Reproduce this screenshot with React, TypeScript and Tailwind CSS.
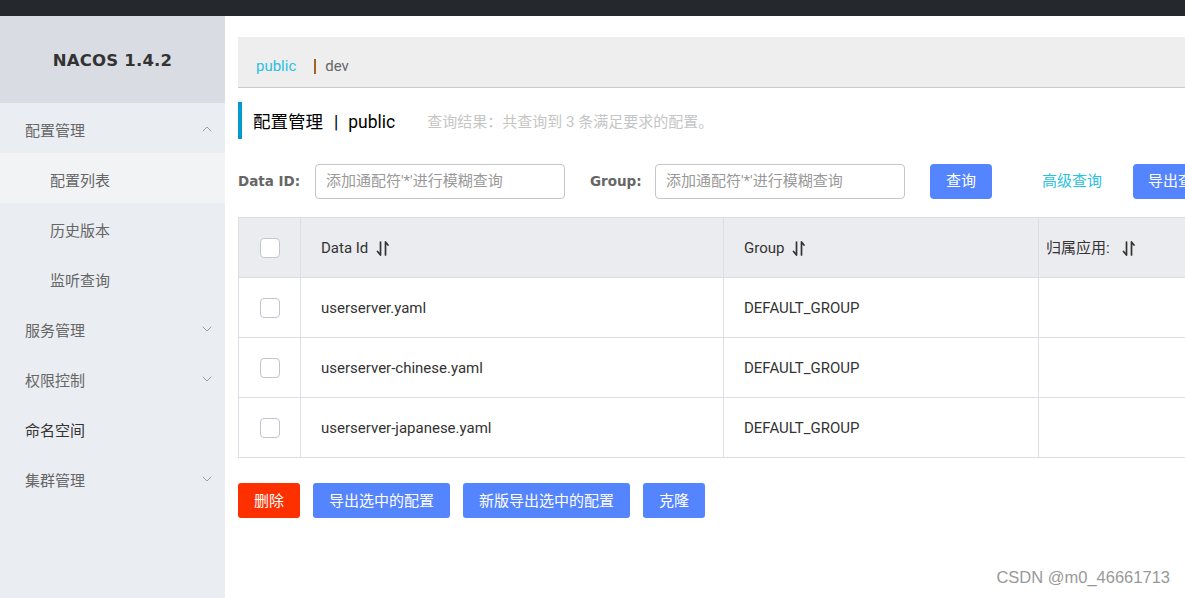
import { ChevronDown, ChevronUp } from "lucide-react";

const FONT = { fontFamily: 'Roboto, "Noto Sans CJK SC", sans-serif' };
const BOLD = { fontFamily: '"DejaVu Sans", sans-serif', fontSize: 13.5 };

function SortIcon({ gap = "ml-2" }: { gap?: string }) {
  return (
    <svg width="14" height="17" viewBox="0 0 14 17" fill="none" aria-hidden className={`${gap} inline-block`}>
      <path d="M4.5 2v13M4.5 15L1.5 11.5" stroke="#333" strokeWidth="1.7" strokeLinecap="round" />
      <path d="M9.5 15V2M9.5 2l2.5 3" stroke="#333" strokeWidth="1.7" strokeLinecap="round" />
    </svg>
  );
}

const menu = [
  { label: "配置管理", open: true, children: ["配置列表", "历史版本", "监听查询"] },
  { label: "服务管理", arrow: true },
  { label: "权限控制", arrow: true },
  { label: "命名空间", dark: true },
  { label: "集群管理", arrow: true },
];

const rows = [
  { id: "userserver.yaml", group: "DEFAULT_GROUP" },
  { id: "userserver-chinese.yaml", group: "DEFAULT_GROUP" },
  { id: "userserver-japanese.yaml", group: "DEFAULT_GROUP" },
];

function Checkbox() {
  return <span className="block w-[20px] h-[20px] rounded-[4px] border border-[#c4c6cf] bg-white" />;
}

export default function App() {
  return (
    <div className="w-[1185px] h-[598px] overflow-hidden bg-white flex flex-col text-[#333]" style={FONT}>
      <div className="h-[16px] bg-[#25292d] shrink-0" />
      <div className="flex flex-1 min-h-0">
        {/* sidebar */}
        <aside className="w-[225px] shrink-0 bg-[#eaedf1] flex flex-col">
          <div className="h-[87px] bg-[#d9dde3] flex items-center justify-center pt-[4px]">
            <span className="font-bold text-[#333] tracking-[0.2px]" style={{ fontFamily: '"DejaVu Sans", sans-serif', fontSize: 16.5 }}>
              NACOS 1.4.2
            </span>
          </div>
          {menu.map((m) => (
            <div key={m.label}>
              <div className="h-[50px] flex items-center justify-between pl-[25px] pr-[10px] pt-[6px]">
                <span className={`text-[15px] ${m.dark ? "text-[#333]" : "text-[#666]"}`}>{m.label}</span>
                {m.open && <ChevronUp size={16} strokeWidth={1.2} className="text-[#888] -mt-[4px]" />}
                {m.arrow && <ChevronDown size={16} strokeWidth={1.2} className="text-[#888] -mt-[4px]" />}
              </div>
              {m.children?.map((c, i) => (
                <div
                  key={c}
                  className={`h-[50px] flex items-center pl-[50px] pt-[6px] text-[15px] text-[#666] ${i === 0 ? "bg-[#f2f3f5]" : ""}`}
                >
                  {c}
                </div>
              ))}
            </div>
          ))}
        </aside>

        {/* main */}
        <main className="flex-1 min-w-0 overflow-hidden pl-[13px] pt-[21px] relative">
          <div className="w-[1100px]">
            <div className="h-[51px] bg-[#eeeeee] border-b border-[#cccccc] flex items-center pl-[18px] pt-[8px] text-[15px]">
              <span className="text-[#2ac1de]">public</span>
              <span className="ml-[18px] w-[2px] h-[15px] bg-[#a0642a]" />
              <span className="ml-[9px] text-[#666]">dev</span>
            </div>

            <div className="mt-[14px] h-[37px] border-l-[4px] border-[#0299cf] flex items-center pl-[11px] pt-[3px] text-[17.5px] text-black">
              <span>配置管理</span>
              <span className="ml-[11px]">|</span>
              <span className="ml-[10px]">public</span>
              <span className="ml-[32px] text-[15px] text-[#c5c5c5]">查询结果：共查询到 3 条满足要求的配置。</span>
            </div>

            <div className="mt-[25px] flex items-center h-[35px]">
              <span className="font-bold text-[#666] w-[77px]" style={BOLD}>Data ID:</span>
              <div className="w-[250px] h-[35px] border border-[#c4c6cf] rounded-[4px] flex items-center pl-[10px] text-[15px] text-[#999]">
                添加通配符'*'进行模糊查询
              </div>
              <span className="ml-[25px] w-[65px] font-bold text-[#666]" style={BOLD}>Group:</span>
              <div className="w-[250px] h-[35px] border border-[#c4c6cf] rounded-[4px] flex items-center pl-[10px] text-[15px] text-[#999]">
                添加通配符'*'进行模糊查询
              </div>
              <button className="ml-[25px] w-[62px] h-[35px] rounded-[4px] bg-[#5584ff] text-white text-[15px]">查询</button>
              <span className="ml-[50px] text-[15px] text-[#2ac1de]">高级查询</span>
              <button className="ml-[31px] h-[35px] px-[15px] rounded-[4px] bg-[#5584ff] text-white text-[15px] whitespace-nowrap">导出查询结果</button>
            </div>

            <table className="mt-[18px] w-full border-collapse text-[15px] text-[#333]">
              <thead>
                <tr className="h-[60px] bg-[#ebecf0]">
                  <th className="w-[62px] border border-[#dcdee3] font-normal">
                    <div className="flex justify-center"><Checkbox /></div>
                  </th>
                  <th className="w-[423px] border border-[#dcdee3] font-normal text-left pl-[20px] pt-[2px]">
                    <span className="inline-flex items-center">Data Id<SortIcon /></span>
                  </th>
                  <th className="w-[315px] border border-[#dcdee3] font-normal text-left pl-[20px] pt-[2px]">
                    <span className="inline-flex items-center">Group<SortIcon /></span>
                  </th>
                  <th className="border border-[#dcdee3] font-normal text-left pl-[7px] pt-[2px]">
                    <span className="inline-flex items-center">归属应用:<SortIcon gap="ml-[12px]" /></span>
                  </th>
                </tr>
              </thead>
              <tbody>
                {rows.map((r) => (
                  <tr key={r.id} className="h-[60px]">
                    <td className="border border-[#dcdee3]">
                      <div className="flex justify-center"><Checkbox /></div>
                    </td>
                    <td className="border border-[#dcdee3] pl-[20px] pt-[2px]">{r.id}</td>
                    <td className="border border-[#dcdee3] pl-[20px] pt-[2px]">{r.group}</td>
                    <td className="border border-[#dcdee3]" />
                  </tr>
                ))}
              </tbody>
            </table>

            <div className="mt-[25px] flex items-center gap-[13px] text-[15px] text-white">
              <button className="w-[62px] h-[35px] rounded-[3px] bg-[#ff3000] pt-[1px]">删除</button>
              <button className="w-[137px] h-[35px] rounded-[3px] bg-[#5584ff] pt-[1px]">导出选中的配置</button>
              <button className="w-[167px] h-[35px] rounded-[3px] bg-[#5584ff] pt-[1px]">新版导出选中的配置</button>
              <button className="w-[62px] h-[35px] rounded-[3px] bg-[#5584ff] pt-[1px]">克隆</button>
            </div>
          </div>
          <span className="absolute right-[15px] bottom-[8px] text-[16.5px] text-[#999]" style={{ fontFamily: '"Liberation Sans", sans-serif' }}>
            CSDN @m0_46661713
          </span>
        </main>
      </div>
    </div>
  );
}
